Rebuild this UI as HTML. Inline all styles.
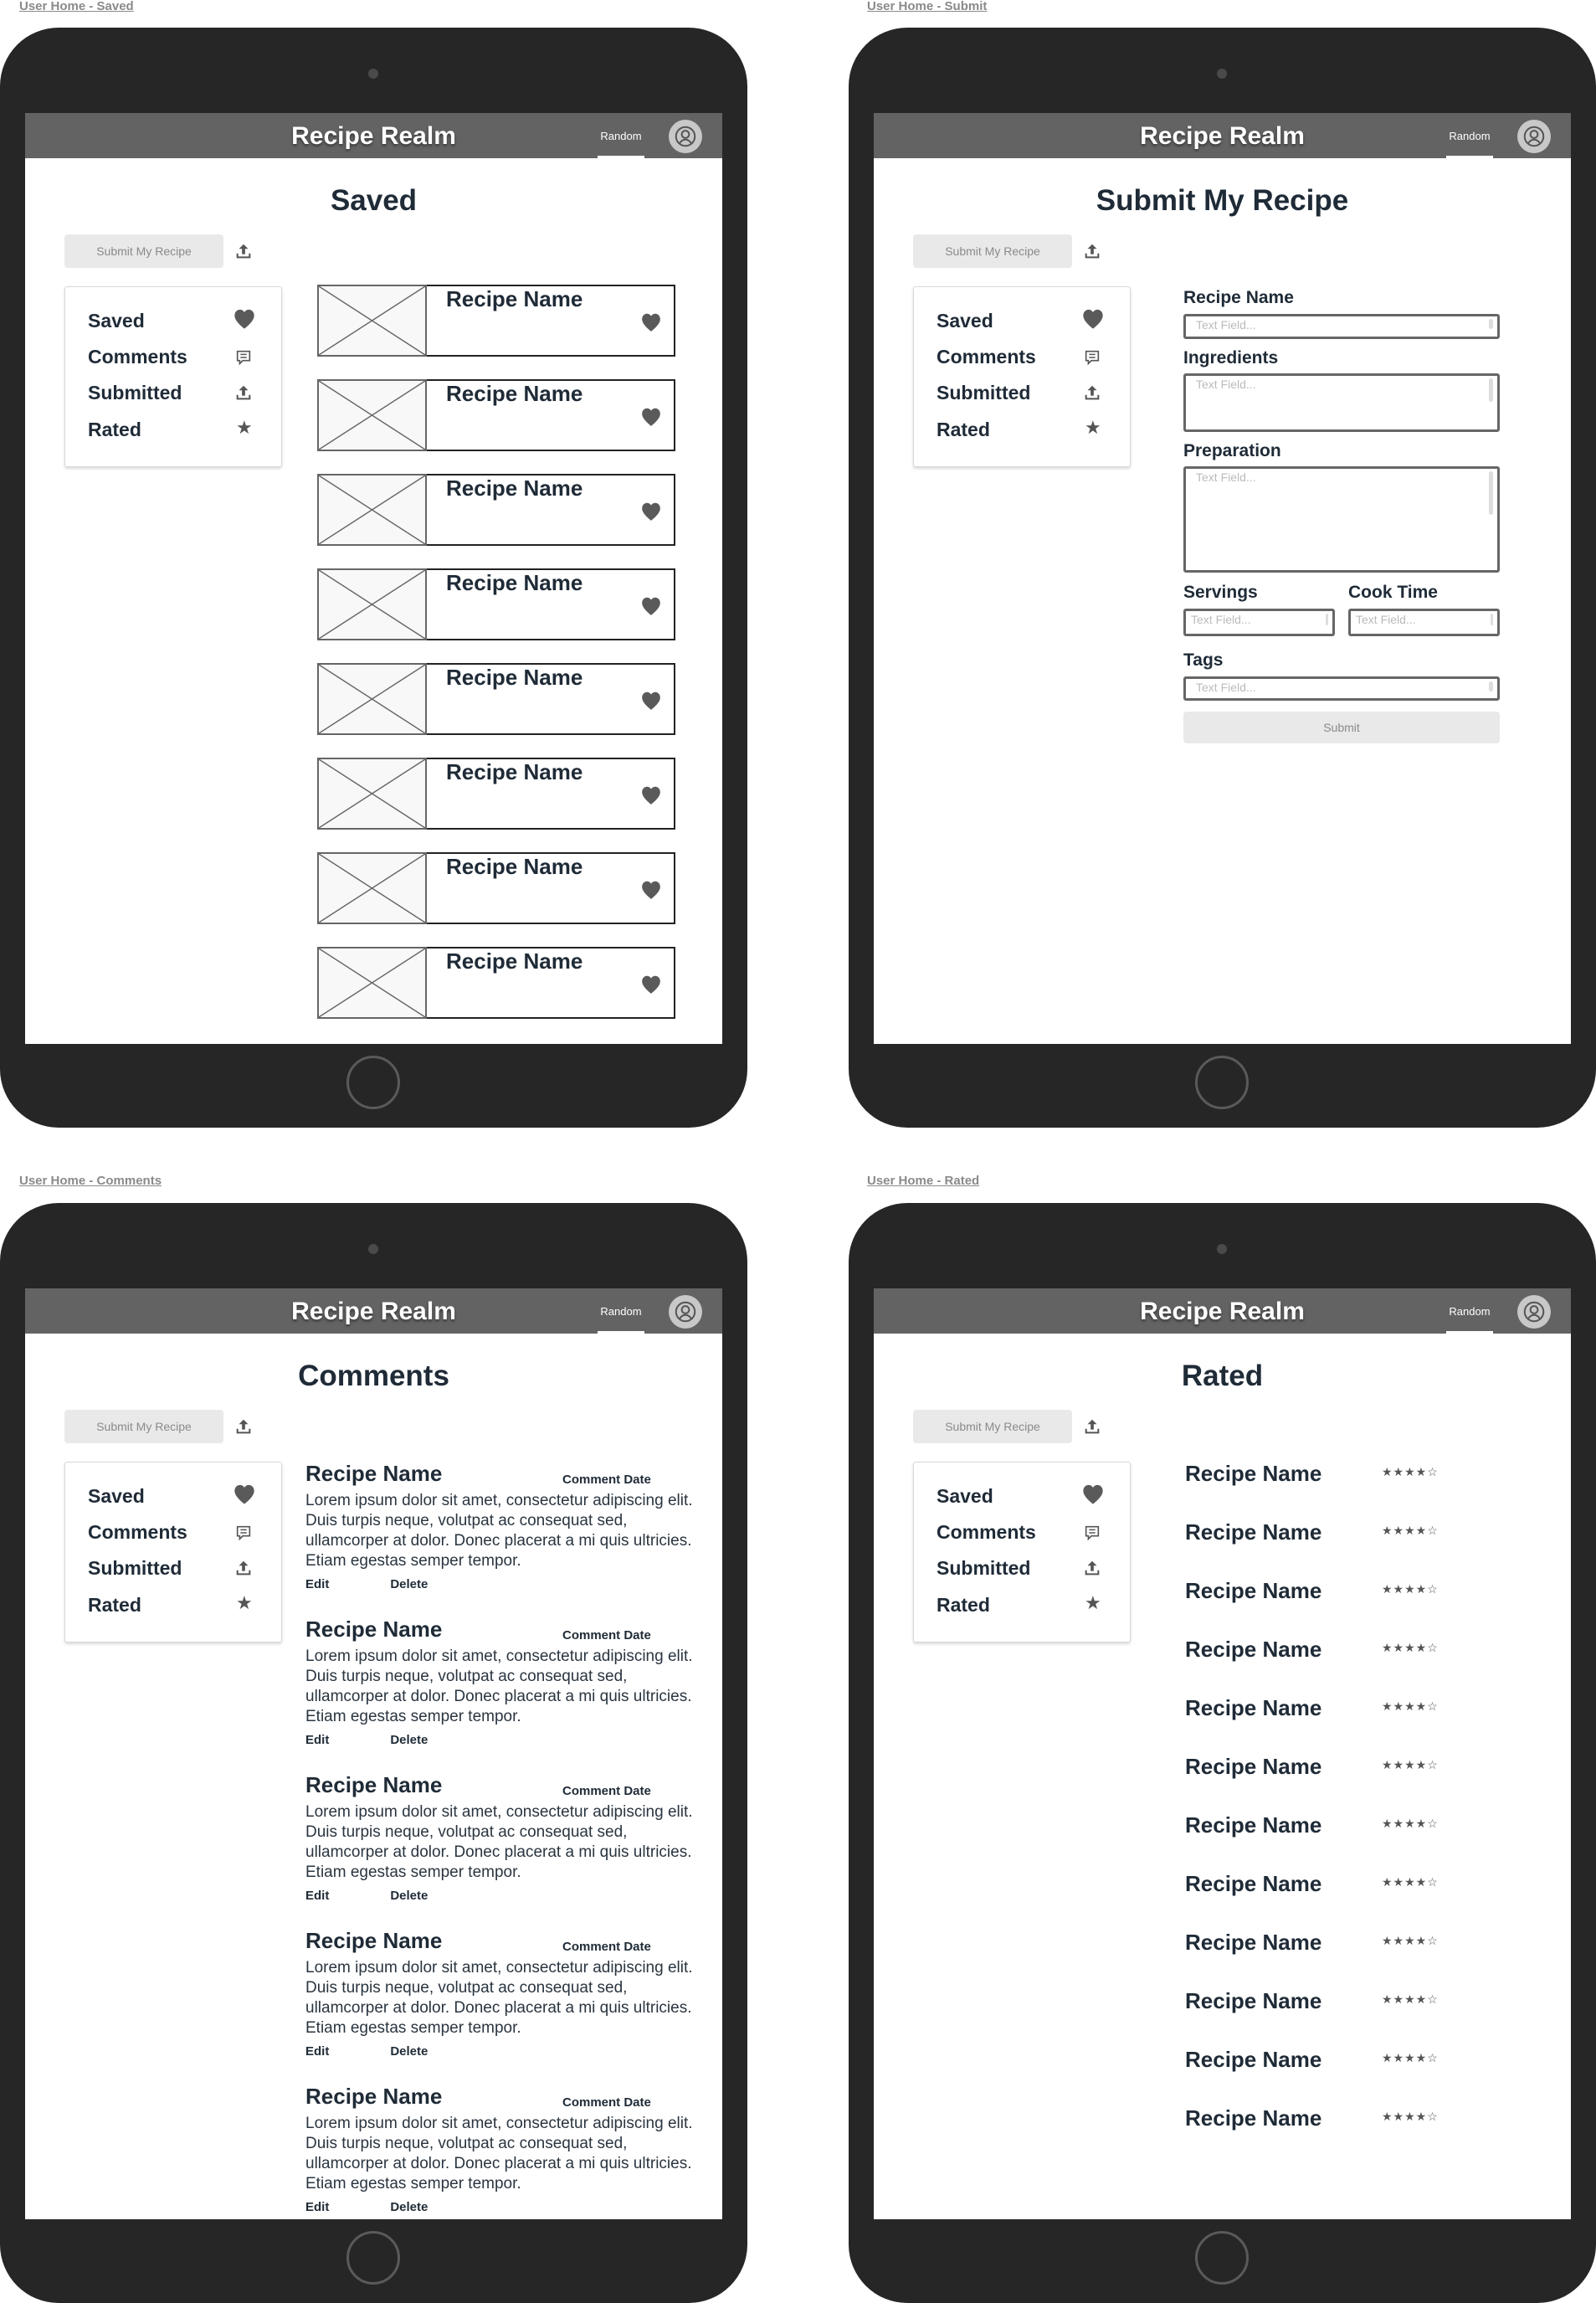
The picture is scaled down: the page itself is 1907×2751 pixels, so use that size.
<!DOCTYPE html>
<html><head><meta charset="utf-8"><style>
*{margin:0;padding:0;box-sizing:border-box}
body{width:1907px;height:2751px;background:#fff;position:relative;overflow:hidden;font-family:"Liberation Sans",sans-serif;color:#1f2b37}
.lbl{position:absolute;font-size:15px;font-weight:bold;color:#8a8a8a;text-decoration:underline}
.dev{position:absolute;width:893px;height:1314px;background:#262626;border-radius:70px}
.cam{position:absolute;left:440px;top:49px;width:12px;height:12px;border-radius:50%;background:#4a4a4a}
.home{position:absolute;left:414px;top:1228px;width:64px;height:64px;border-radius:50%;border:3px solid #5a5a5a}
.scr{position:absolute;left:30px;top:102px;width:833px;height:1112px;background:#fff;overflow:hidden}
.hdr{position:absolute;left:0;top:0;width:833px;height:54px;background:#636363}
.brand{position:absolute;left:0;width:833px;top:11px;text-align:center;color:#fff;font-size:30px;font-weight:bold;text-shadow:0 2px 3px rgba(0,0,0,.5)}
.rnd{position:absolute;left:684px;top:20px;width:56px;text-align:center;color:#fff;font-size:13px}
.rul{position:absolute;left:684px;top:51px;width:56px;height:3px;background:#fff}
.av{position:absolute;left:769px;top:8px;width:40px;height:40px;border-radius:50%;background:#c8c8c8}
.ttl{position:absolute;left:0;width:833px;top:85px;text-align:center;font-size:35px;font-weight:bold}
.sbtn{position:absolute;left:47px;top:145px;width:190px;height:40px;background:#e9e9e9;border-radius:4px;color:#8a8a8a;font-size:14px;text-align:center;line-height:40px}
.up{position:absolute;left:250px;top:154px}
.side{position:absolute;left:47px;top:207px;width:260px;height:216px;border:1px solid #d8d8d8;border-radius:3px;box-shadow:0 2px 3px rgba(0,0,0,.15)}
.si{position:absolute;left:27px;font-size:23px;font-weight:bold}
.sic{position:absolute;left:200px}
.card{position:absolute;left:349px;width:428px;height:86px;border:2px solid #222}
.img{position:absolute;left:-2px;top:-2px;width:131px;height:86px;border:2px solid #666;background:#f8f8f8}
.cn{position:absolute;left:152px;top:0px;font-size:26px;font-weight:bold}
.ch{position:absolute;left:384px;top:30px}
.fl{position:absolute;left:370px;font-size:21px;font-weight:bold}
.tf{position:absolute;border:3px solid #666;border-radius:3px;font-size:14px;color:#bbb;padding:2px 12px}
.tf i{position:absolute;right:5px;top:3px;width:5px;background:#ddd;border-radius:3px}
.cr{position:absolute;left:335px;width:500px}
.cr b.n{font-size:26px;display:block;height:33px}
.cr .d{position:absolute;left:307px;top:14px;font-size:15px;font-weight:bold}
.cr p{font-size:19px;line-height:24px;color:#2a3540;margin-top:3px}
.cr .e{font-size:15px;font-weight:bold;margin-top:7px;height:20px}
.rn{position:absolute;left:372px;font-size:26px;font-weight:bold}
.st{position:absolute;left:607px;font-size:14px;color:#555;letter-spacing:1px}
</style></head><body>
<svg width="0" height="0" style="position:absolute"><defs>
<symbol id="hrt" viewBox="0 0 24 24"><path d="M12 22C9 19.5 2 14 2 8.5 2 5 4.5 2.5 7.5 2.5c2 0 3.6 1.1 4.5 2.7.9-1.6 2.5-2.7 4.5-2.7 3 0 5.5 2.5 5.5 6 0 5.5-7 11-10 13.5z" fill="#5a5a5a"/></symbol>
<symbol id="upl" viewBox="0 0 24 24"><path d="M12 3l-6 6h4v7h4V9h4z" fill="#555"/><path d="M4 15v5h16v-5" fill="none" stroke="#555" stroke-width="2.2"/></symbol>
<symbol id="cmt" viewBox="0 0 24 24"><path d="M4 4h16v12H11l-4 4v-4H4z" fill="none" stroke="#555" stroke-width="1.8"/><path d="M8 8h8M8 12h8" stroke="#555" stroke-width="1.6"/></symbol>
<symbol id="avt" viewBox="0 0 24 24"><circle cx="12" cy="12" r="9" fill="none" stroke="#555" stroke-width="1.6"/><circle cx="12" cy="10" r="3.5" fill="none" stroke="#555" stroke-width="1.6"/><path d="M6.5 18.5c1.5-2.5 3.5-3.5 5.5-3.5s4 1 5.5 3.5" fill="none" stroke="#555" stroke-width="1.6"/></symbol>
<symbol id="xx" viewBox="0 0 131 86" preserveAspectRatio="none"><path d="M0 0L131 86M131 0L0 86" stroke="#666" stroke-width="1.5"/></symbol>
</defs></svg>

<div class="lbl" style="left:23px;top:-1px">User Home - Saved</div>
<div class="lbl" style="left:1036px;top:-1px">User Home - Submit</div>
<div class="lbl" style="left:23px;top:1402px">User Home - Comments</div>
<div class="lbl" style="left:1036px;top:1402px">User Home - Rated</div>

<!-- Device 1: Saved -->
<div class="dev" style="left:0;top:33px"><div class="cam"></div><div class="home"></div>
<div class="scr">
<div class="hdr"><div class="brand">Recipe Realm</div><div class="rnd">Random</div><div class="rul"></div><div class="av"><svg width="30" height="30" style="margin:5px"><use href="#avt"/></svg></div></div>
<div class="ttl">Saved</div>
<div class="sbtn">Submit My Recipe</div><svg class="up" width="22" height="22"><use href="#upl"/></svg>
<div class="side">
<div class="si" style="top:27px">Saved</div><svg class="sic" style="top:24px" width="28" height="28"><use href="#hrt"/></svg>
<div class="si" style="top:70px">Comments</div><svg class="sic" style="top:73px;left:202px" width="22" height="22"><use href="#cmt"/></svg>
<div class="si" style="top:113px">Submitted</div><svg class="sic" style="top:115px;left:202px" width="22" height="22"><use href="#upl"/></svg>
<div class="si" style="top:157px">Rated</div><div class="sic" style="top:155px;left:204px;font-size:22px;color:#555">★</div>
</div>
<div class="card" style="top:205px"><div class="img"><svg width="127" height="82"><use href="#xx"/></svg></div><div class="cn">Recipe Name</div><svg class="ch" width="26" height="26"><use href="#hrt"/></svg></div>
<div class="card" style="top:318px"><div class="img"><svg width="127" height="82"><use href="#xx"/></svg></div><div class="cn">Recipe Name</div><svg class="ch" width="26" height="26"><use href="#hrt"/></svg></div>
<div class="card" style="top:431px"><div class="img"><svg width="127" height="82"><use href="#xx"/></svg></div><div class="cn">Recipe Name</div><svg class="ch" width="26" height="26"><use href="#hrt"/></svg></div>
<div class="card" style="top:544px"><div class="img"><svg width="127" height="82"><use href="#xx"/></svg></div><div class="cn">Recipe Name</div><svg class="ch" width="26" height="26"><use href="#hrt"/></svg></div>
<div class="card" style="top:657px"><div class="img"><svg width="127" height="82"><use href="#xx"/></svg></div><div class="cn">Recipe Name</div><svg class="ch" width="26" height="26"><use href="#hrt"/></svg></div>
<div class="card" style="top:770px"><div class="img"><svg width="127" height="82"><use href="#xx"/></svg></div><div class="cn">Recipe Name</div><svg class="ch" width="26" height="26"><use href="#hrt"/></svg></div>
<div class="card" style="top:883px"><div class="img"><svg width="127" height="82"><use href="#xx"/></svg></div><div class="cn">Recipe Name</div><svg class="ch" width="26" height="26"><use href="#hrt"/></svg></div>
<div class="card" style="top:996px"><div class="img"><svg width="127" height="82"><use href="#xx"/></svg></div><div class="cn">Recipe Name</div><svg class="ch" width="26" height="26"><use href="#hrt"/></svg></div>
</div></div>

<!-- Device 2: Submit -->
<div class="dev" style="left:1014px;top:33px"><div class="cam"></div><div class="home"></div>
<div class="scr">
<div class="hdr"><div class="brand">Recipe Realm</div><div class="rnd">Random</div><div class="rul"></div><div class="av"><svg width="30" height="30" style="margin:5px"><use href="#avt"/></svg></div></div>
<div class="ttl">Submit My Recipe</div>
<div class="sbtn">Submit My Recipe</div><svg class="up" width="22" height="22"><use href="#upl"/></svg>
<div class="side">
<div class="si" style="top:27px">Saved</div><svg class="sic" style="top:24px" width="28" height="28"><use href="#hrt"/></svg>
<div class="si" style="top:70px">Comments</div><svg class="sic" style="top:73px;left:202px" width="22" height="22"><use href="#cmt"/></svg>
<div class="si" style="top:113px">Submitted</div><svg class="sic" style="top:115px;left:202px" width="22" height="22"><use href="#upl"/></svg>
<div class="si" style="top:157px">Rated</div><div class="sic" style="top:155px;left:204px;font-size:22px;color:#555">★</div>
</div>
<div class="fl" style="top:209px">Recipe Name</div>
<div class="tf" style="left:370px;top:240px;width:378px;height:30px">Text Field...<i style="height:12px"></i></div>
<div class="fl" style="top:281px">Ingredients</div>
<div class="tf" style="left:370px;top:311px;width:378px;height:70px">Text Field...<i style="height:28px"></i></div>
<div class="fl" style="top:392px">Preparation</div>
<div class="tf" style="left:370px;top:422px;width:378px;height:127px">Text Field...<i style="height:52px"></i></div>
<div class="fl" style="top:561px">Servings</div>
<div class="fl" style="top:561px;left:567px">Cook Time</div>
<div class="tf" style="left:370px;top:592px;width:181px;height:33px;padding-left:6px">Text Field...<i style="height:14px;width:3px"></i></div>
<div class="tf" style="left:567px;top:592px;width:181px;height:33px;padding-left:6px">Text Field...<i style="height:14px;width:3px"></i></div>
<div class="fl" style="top:642px">Tags</div>
<div class="tf" style="left:370px;top:673px;width:378px;height:29px">Text Field...<i style="height:12px"></i></div>
<div class="sbtn" style="left:370px;top:715px;width:378px;height:38px;line-height:38px;font-size:14px">Submit</div>
</div></div>

<!-- Device 3: Comments -->
<div class="dev" style="left:0;top:1437px"><div class="cam"></div><div class="home"></div>
<div class="scr">
<div class="hdr"><div class="brand">Recipe Realm</div><div class="rnd">Random</div><div class="rul"></div><div class="av"><svg width="30" height="30" style="margin:5px"><use href="#avt"/></svg></div></div>
<div class="ttl">Comments</div>
<div class="sbtn">Submit My Recipe</div><svg class="up" width="22" height="22"><use href="#upl"/></svg>
<div class="side">
<div class="si" style="top:27px">Saved</div><svg class="sic" style="top:24px" width="28" height="28"><use href="#hrt"/></svg>
<div class="si" style="top:70px">Comments</div><svg class="sic" style="top:73px;left:202px" width="22" height="22"><use href="#cmt"/></svg>
<div class="si" style="top:113px">Submitted</div><svg class="sic" style="top:115px;left:202px" width="22" height="22"><use href="#upl"/></svg>
<div class="si" style="top:157px">Rated</div><div class="sic" style="top:155px;left:204px;font-size:22px;color:#555">★</div>
</div>
<div class="cr" style="top:206px"><b class="n">Recipe Name</b><span class="d">Comment Date</span><p>Lorem ipsum dolor sit amet, consectetur adipiscing elit.<br>Duis turpis neque, volutpat ac consequat sed,<br>ullamcorper at dolor. Donec placerat a mi quis ultricies.<br>Etiam egestas semper tempor.</p><div class="e">Edit<span style="margin-left:73px">Delete</span></div></div>
<div class="cr" style="top:392px"><b class="n">Recipe Name</b><span class="d">Comment Date</span><p>Lorem ipsum dolor sit amet, consectetur adipiscing elit.<br>Duis turpis neque, volutpat ac consequat sed,<br>ullamcorper at dolor. Donec placerat a mi quis ultricies.<br>Etiam egestas semper tempor.</p><div class="e">Edit<span style="margin-left:73px">Delete</span></div></div>
<div class="cr" style="top:578px"><b class="n">Recipe Name</b><span class="d">Comment Date</span><p>Lorem ipsum dolor sit amet, consectetur adipiscing elit.<br>Duis turpis neque, volutpat ac consequat sed,<br>ullamcorper at dolor. Donec placerat a mi quis ultricies.<br>Etiam egestas semper tempor.</p><div class="e">Edit<span style="margin-left:73px">Delete</span></div></div>
<div class="cr" style="top:764px"><b class="n">Recipe Name</b><span class="d">Comment Date</span><p>Lorem ipsum dolor sit amet, consectetur adipiscing elit.<br>Duis turpis neque, volutpat ac consequat sed,<br>ullamcorper at dolor. Donec placerat a mi quis ultricies.<br>Etiam egestas semper tempor.</p><div class="e">Edit<span style="margin-left:73px">Delete</span></div></div>
<div class="cr" style="top:950px"><b class="n">Recipe Name</b><span class="d">Comment Date</span><p>Lorem ipsum dolor sit amet, consectetur adipiscing elit.<br>Duis turpis neque, volutpat ac consequat sed,<br>ullamcorper at dolor. Donec placerat a mi quis ultricies.<br>Etiam egestas semper tempor.</p><div class="e">Edit<span style="margin-left:73px">Delete</span></div></div>
</div></div>

<!-- Device 4: Rated -->
<div class="dev" style="left:1014px;top:1437px"><div class="cam"></div><div class="home"></div>
<div class="scr">
<div class="hdr"><div class="brand">Recipe Realm</div><div class="rnd">Random</div><div class="rul"></div><div class="av"><svg width="30" height="30" style="margin:5px"><use href="#avt"/></svg></div></div>
<div class="ttl">Rated</div>
<div class="sbtn">Submit My Recipe</div><svg class="up" width="22" height="22"><use href="#upl"/></svg>
<div class="side">
<div class="si" style="top:27px">Saved</div><svg class="sic" style="top:24px" width="28" height="28"><use href="#hrt"/></svg>
<div class="si" style="top:70px">Comments</div><svg class="sic" style="top:73px;left:202px" width="22" height="22"><use href="#cmt"/></svg>
<div class="si" style="top:113px">Submitted</div><svg class="sic" style="top:115px;left:202px" width="22" height="22"><use href="#upl"/></svg>
<div class="si" style="top:157px">Rated</div><div class="sic" style="top:155px;left:204px;font-size:22px;color:#555">★</div>
</div>
<div class="rn" style="top:206px">Recipe Name</div><div class="st" style="top:211px">★★★★☆</div>
<div class="rn" style="top:276px">Recipe Name</div><div class="st" style="top:281px">★★★★☆</div>
<div class="rn" style="top:346px">Recipe Name</div><div class="st" style="top:351px">★★★★☆</div>
<div class="rn" style="top:416px">Recipe Name</div><div class="st" style="top:421px">★★★★☆</div>
<div class="rn" style="top:486px">Recipe Name</div><div class="st" style="top:491px">★★★★☆</div>
<div class="rn" style="top:556px">Recipe Name</div><div class="st" style="top:561px">★★★★☆</div>
<div class="rn" style="top:626px">Recipe Name</div><div class="st" style="top:631px">★★★★☆</div>
<div class="rn" style="top:696px">Recipe Name</div><div class="st" style="top:701px">★★★★☆</div>
<div class="rn" style="top:766px">Recipe Name</div><div class="st" style="top:771px">★★★★☆</div>
<div class="rn" style="top:836px">Recipe Name</div><div class="st" style="top:841px">★★★★☆</div>
<div class="rn" style="top:906px">Recipe Name</div><div class="st" style="top:911px">★★★★☆</div>
<div class="rn" style="top:976px">Recipe Name</div><div class="st" style="top:981px">★★★★☆</div>
</div></div>
</body></html>
